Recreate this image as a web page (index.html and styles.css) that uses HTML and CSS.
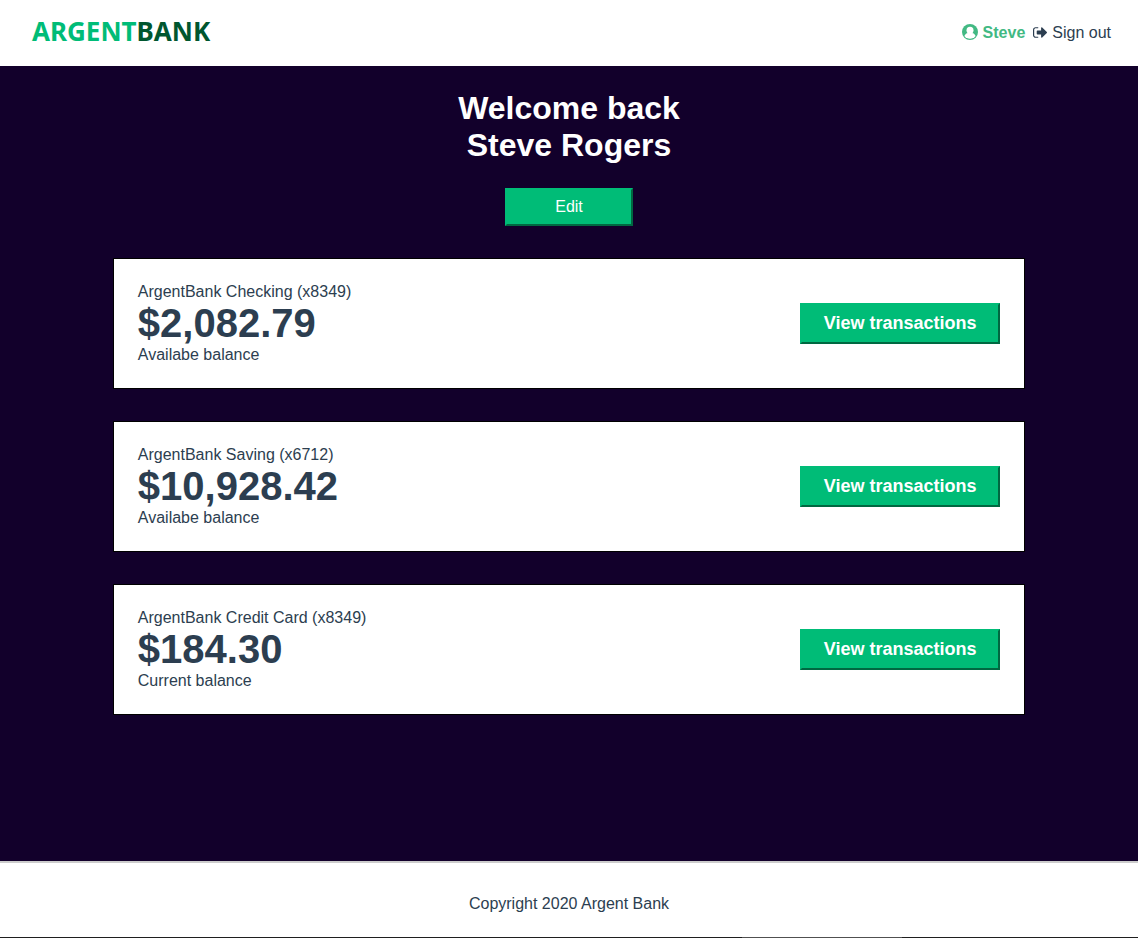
FILE: index.html
```html
<!DOCTYPE html>
<html lang="en">
<head>
<meta charset="utf-8">
<meta name="viewport" content="width=device-width, initial-scale=1">
<title>Argent Bank</title>
<link rel="stylesheet" href="styles.css">
</head>
<body>
<header class="main-nav">
  <a class="logo" href="#"><span class="logo-light">ARGENT</span><span class="logo-dark">BANK</span></a>
  <nav class="nav-links">
    <a class="nav-item nav-user" href="#">
      <svg class="icon-user" viewBox="0 0 16 16" aria-hidden="true"><circle cx="8" cy="8" r="8" fill="currentColor"/><circle cx="8" cy="6.200" r="3.500" fill="#fff"/><path d="M2.400 12C3 10.200 4.200 9.200 6 8.900h4c1.800.3 3 1.300 3.600 3.100A6.900 6.900 0 0 1 2.400 12z" fill="#fff"/></svg>
      Steve</a>
    <a class="nav-item" href="#">
      <svg class="icon-out" viewBox="0 0 512 512" aria-hidden="true"><path fill="currentColor" d="M505 273L337 441c-15 15-41 4.500-41-17v-96H160c-13.300 0-24-10.700-24-24v-96c0-13.300 10.700-24 24-24h136V88c0-21.400 25.900-32 41-17l168 168c9.300 9.400 9.300 24.600 0 34zM192 440v-20c0-6.600-5.400-12-12-12H96c-28 0-52-24-52-52V156c0-28 24-52 52-52h84c6.600 0 12-5.400 12-12V76c0-6.600-5.400-12-12-12H96c-53 0-96 43-96 96v192c0 53 43 96 96 96h84c6.600 0 12-5.400 12-8z"/></svg>
      Sign out</a>
  </nav>
</header>
<main class="main">
  <h1 class="welcome">Welcome back<br>Steve Rogers</h1>
  <button class="edit-button" type="button">Edit</button>
  <section class="account">
    <div class="account-text">
      <h2 class="account-title">ArgentBank Checking (x8349)</h2>
      <p class="account-amount">$2,082.79</p>
      <p class="account-note">Availabe balance</p>
    </div>
    <button class="transaction-button" type="button">View transactions</button>
  </section>
  <section class="account">
    <div class="account-text">
      <h2 class="account-title">ArgentBank Saving (x6712)</h2>
      <p class="account-amount">$10,928.42</p>
      <p class="account-note">Availabe balance</p>
    </div>
    <button class="transaction-button" type="button">View transactions</button>
  </section>
  <section class="account">
    <div class="account-text">
      <h2 class="account-title">ArgentBank Credit Card (x8349)</h2>
      <p class="account-amount">$184.30</p>
      <p class="account-note">Current balance</p>
    </div>
    <button class="transaction-button" type="button">View transactions</button>
  </section>
</main>
<footer class="footer">
  <p class="footer-text">Copyright 2020 Argent Bank</p>
</footer>
<div class="edge"><div class="edge-tab"></div></div>
</body>
</html>
```

FILE: styles.css
```css
* { box-sizing: border-box; }

body {
  margin: 0;
  min-height: 100vh;
  display: flex;
  flex-direction: column;
  font: 16px/18px "Liberation Sans", Arial, sans-serif;
  color: #2c3e50;
  background: #fff;
}

h1, h2, p { margin: 0; }

.main-nav {
  display: flex;
  justify-content: space-between;
  align-items: center;
  min-height: 66px;
  padding: 0 27px 0 32px;
}

.logo {
  padding-bottom: 4px;
  font: 700 26px/36px "Noto Sans", "Open Sans", sans-serif;
  text-decoration: none;
}
.logo-light { color: #00bc77; }
.logo-dark { color: #00562f; }

.nav-links { display: flex; gap: 8px; }
.nav-item {
  display: flex;
  align-items: center;
  gap: 5px;
  color: #2c3e50;
  text-decoration: none;
}
.nav-user { color: #42b983; font-weight: 700; }
.icon-user { width: 16px; height: 16px; margin-bottom: 2px; }
.icon-out { width: 14px; height: 15px; margin-bottom: 2px; }

.main {
  flex: 1;
  display: flex;
  flex-direction: column;
  align-items: center;
  padding: 24px 0;
  background: #12002b;
}

.welcome {
  font-size: 32px;
  line-height: 37px;
  text-align: center;
  color: #fff;
}

.edit-button, .transaction-button {
  border: 2px outset #00bc77;
  background: #00bc77;
  color: #fff;
  font-family: inherit;
  cursor: pointer;
}
.edit-button {
  width: 128px;
  margin: 24px 0 32px;
  padding: 8px;
  font-size: 16px;
  line-height: 18px;
}
.transaction-button {
  width: 200px;
  padding: 8px;
  font-size: 18px;
  line-height: 21px;
  font-weight: 700;
}

.account {
  display: flex;
  justify-content: space-between;
  align-items: center;
  width: calc(80% + 2px);
  margin-bottom: 32px;
  padding: 24px;
  border: 1px solid #000;
  background: #fff;
}
.account-title { font-size: 16px; font-weight: 400; }
.account-amount { font-size: 40px; line-height: 45px; font-weight: 700; }

.footer {
  padding: 32px 0 24px;
  border-top: 2px solid #ccc;
  text-align: center;
}

.edge { height: 1px; padding-left: 65.2%; background: #1f1f1f; }
.edge-tab { width: 160px; height: 1px; background: #505050; }
```
